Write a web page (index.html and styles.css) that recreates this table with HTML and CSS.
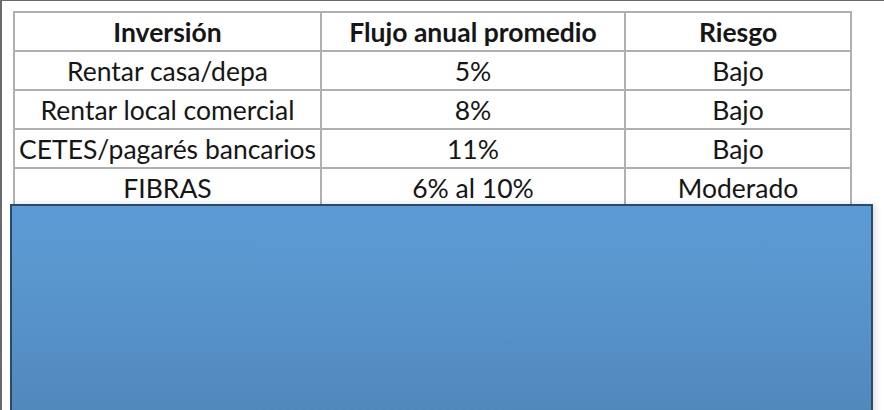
FILE: index.html
```html
<!DOCTYPE html>
<html lang="es">
<head>
<meta charset="utf-8">
<title>Inversiones</title>
<link rel="stylesheet" href="styles.css">
</head>
<body>
<div class="frame">
  <table class="grid">
    <colgroup>
      <col class="c1"><col class="c2"><col class="c3">
    </colgroup>
    <thead>
      <tr><th>Inversión</th><th>Flujo anual promedio</th><th>Riesgo</th></tr>
    </thead>
    <tbody>
      <tr><td>Rentar casa/depa</td><td>5%</td><td>Bajo</td></tr>
      <tr><td>Rentar local comercial</td><td>8%</td><td>Bajo</td></tr>
      <tr><td>CETES/pagarés bancarios</td><td>11%</td><td>Bajo</td></tr>
      <tr><td>FIBRAS</td><td>6% al 10%</td><td>Moderado</td></tr>
    </tbody>
  </table>
  <div class="cover"></div>
</div>
</body>
</html>
```
FILE: styles.css
```css
* { box-sizing: border-box; }
html, body { margin: 0; padding: 0; background: #ffffff; }
.frame {
  position: relative;
  width: 884px;
  height: 410px;
  overflow: hidden;
  border-top: 1px solid #6a6a6a;
  border-left: 2px solid #6a6a6a;
  background: #ffffff;
}
.grid {
  margin: 10px 0 0 11px;
  width: 837px;
  border-collapse: collapse;
  table-layout: fixed;
  font-family: Lato, "Open Sans", sans-serif;
  font-size: 26.5px;
  color: #161616;
}
.c1 { width: 307px; }
.c2 { width: 304px; }
.c3 { width: 226px; }
.grid tr { height: 39px; }
.grid th, .grid td {
  border: 2px solid #b0b0b0;
  padding: 0;
  text-align: center;
  vertical-align: middle;
  line-height: 26px;
  white-space: nowrap;
}
.grid th { font-weight: 700; }
.grid td { font-weight: 400; }
.cover {
  position: absolute;
  left: 8px;
  top: 203px;
  width: 863px;
  height: 230px;
  border: 2px solid #2c4a68;
  background: linear-gradient(#5b9bd5, #5a97cf 30%, #4f86b9 100%);
  box-shadow: 3px 0 6px rgba(0,0,0,0.12);
}
```
